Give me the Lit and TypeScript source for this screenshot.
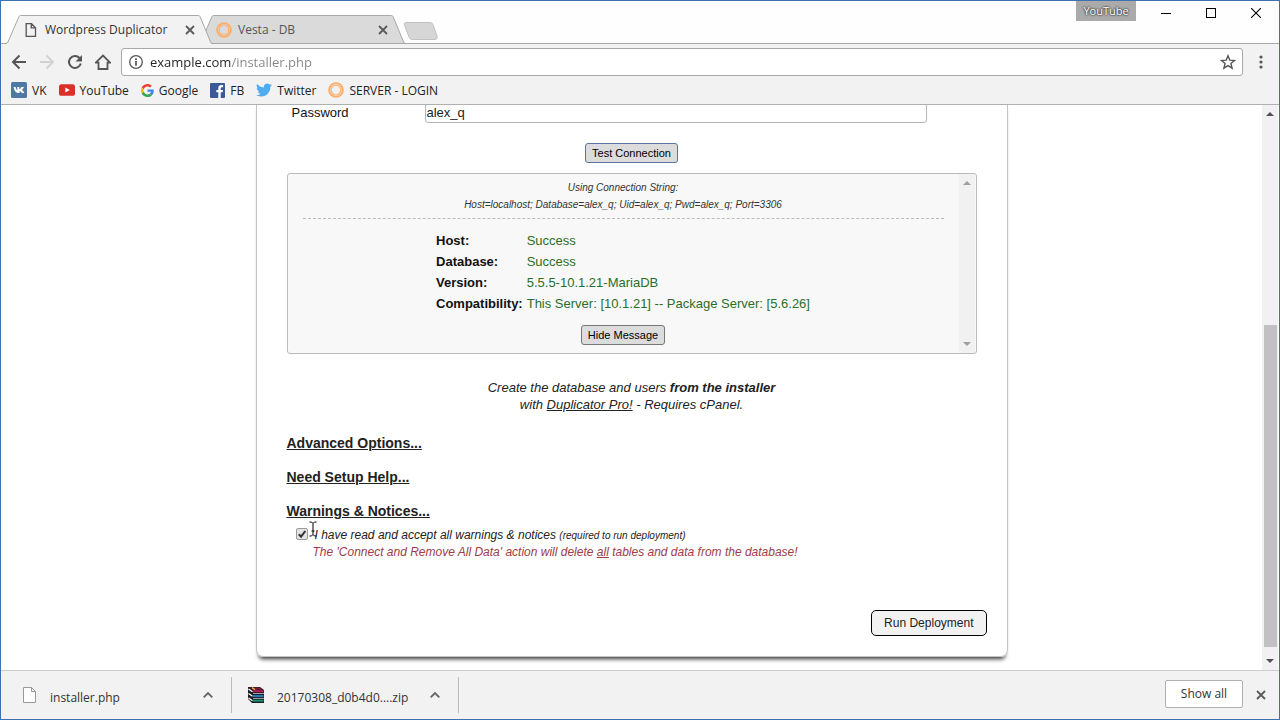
import { LitElement, html, css, svg } from "lit";
import { customElement, state } from "lit/decorators.js";

const cross = html`<svg class="cross" viewBox="0 0 10 10" width="10" height="10"><path d="M1 1l8 8M9 1l-8 8" stroke="#5a5a5a" stroke-width="1.8" fill="none"/></svg>`;
const ringIcon = html`<svg viewBox="0 0 16 16" width="16" height="16"><circle cx="8" cy="8" r="6.9" fill="none" stroke="#fbae6b" stroke-width="1.9"/><circle cx="8" cy="8" r="4.9" fill="none" stroke="#fcb577" stroke-width="1.4"/></svg>`;
const pageIcon = html`<svg viewBox="0 0 16 16" width="16" height="16"><path d="M3.200 1.700h5.300l4 4v8.600H3.200zM8.300 1.700v4.200h4.200" fill="none" stroke="#555" stroke-width="1.300"/></svg>`;

const bookmarks = [
  { label: "VK", icon: html`<svg viewBox="0 0 16 16" width="16" height="16"><rect width="16" height="16" rx="1.5" fill="#4f78a4"/><path d="M2.600 5h2c.2 1.500.9 2.900 1.700 3.200V5h2v2.200C9.200 7 9.900 6 10.300 5h2.600c-.4 1.300-1.300 2.400-2 3 .8.500 1.900 1.500 2.500 3h-2.600c-.4-1-1.300-1.800-2.200-2v2h-.7C5 11 3.100 9 2.600 5z" fill="#fff"/></svg>` },
  { label: "YouTube", icon: html`<svg viewBox="0 0 16 16" width="16" height="16"><rect y="2.200" width="16" height="11.600" rx="2.600" fill="#dc2f26"/><path d="M6.300 5.400v5L10.800 8z" fill="#fff"/></svg>` },
  { label: "Google", icon: html`<svg viewBox="0 0 48 48" width="13" height="13"><path fill="#EA4335" d="M24 9.500c3.540 0 6.710 1.220 9.210 3.600l6.850-6.850C35.900 2.380 30.470 0 24 0 14.620 0 6.510 5.380 2.560 13.220l7.980 6.190C12.430 13.720 17.740 9.500 24 9.500z"/><path fill="#4285F4" d="M46.980 24.550c0-1.570-.15-3.090-.38-4.550H24v9.020h12.940c-.58 2.960-2.260 5.480-4.780 7.180l7.730 6c4.510-4.180 7.090-10.360 7.090-17.650z"/><path fill="#FBBC05" d="M10.530 28.590c-.48-1.450-.76-2.990-.76-4.590s.27-3.140.76-4.590l-7.980-6.190C.92 16.460 0 20.120 0 24c0 3.880.92 7.540 2.560 10.780l7.970-6.190z"/><path fill="#34A853" d="M24 48c6.480 0 11.930-2.130 15.890-5.810l-7.730-6c-2.150 1.450-4.920 2.300-8.160 2.300-6.260 0-11.570-4.220-13.470-9.910l-7.980 6.190C6.510 42.620 14.620 48 24 48z"/></svg>` },
  { label: "FB", icon: html`<svg viewBox="0 0 15 15" width="15" height="15"><rect width="15" height="15" rx="1" fill="#3b5998"/><path d="M8.300 15V9.300H6.300V7h2V5.200C8.300 3.200 9.500 2 11.400 2h1.700v2.200h-1.200c-.9 0-1.200.4-1.200 1.200V7H13l-.3 2.300h-2V15z" fill="#fff"/></svg>` },
  { label: "Twitter", icon: html`<svg viewBox="0 0 24 24" width="16" height="16"><path fill="#50abf1" d="M23.950 4.570a10 10 0 0 1-2.820.77 4.960 4.960 0 0 0 2.160-2.720c-.95.550-2 .95-3.130 1.180a4.920 4.920 0 0 0-8.380 4.480C7.690 8.100 4.070 6.130 1.640 3.160a4.820 4.820 0 0 0-.67 2.480c0 1.710.87 3.210 2.190 4.100a4.900 4.900 0 0 1-2.230-.62v.06a4.920 4.920 0 0 0 3.950 4.830 5 5 0 0 1-2.210.08 4.940 4.940 0 0 0 4.600 3.420A9.870 9.870 0 0 1 0 19.540a13.990 13.990 0 0 0 7.550 2.210c9.050 0 14-7.500 14-13.980 0-.21 0-.42-.02-.63a9.940 9.940 0 0 0 2.420-2.570z"/></svg>` },
  { label: "SERVER - LOGIN", icon: ringIcon },
];

const results = [
  ["Host:", "Success"],
  ["Database:", "Success"],
  ["Version:", "5.5.5-10.1.21-MariaDB"],
  ["Compatibility:", "This Server: [10.1.21] -- Package Server: [5.6.26]"],
];

const arrow = (d: string, fill: string) => html`<svg viewBox="0 0 8 4" width="8" height="4"><path d=${d} fill=${fill}/></svg>`;
const UP = "M0 4L4 0l4 4z";
const DOWN = "M0 0l4 4 4-4z";

@customElement("app-root")
export class AppRoot extends LitElement {
  @state() private accepted = true;

  static styles = css`
    :host {
      display: block;
      font-family: "Open Sans", "Noto Sans", sans-serif;
      font-size: 12px;
      color: #222;
    }
    * { box-sizing: border-box; }
    button { font: inherit; color: inherit; margin: 0; padding: 0; border: 0; background: none; }
    svg { display: block; flex: none; }
    .window {
      height: 100vh;
      display: flex;
      flex-direction: column;
      border: 1px solid #3d71b0;
      background: #fff;
      overflow: hidden;
    }
    .strip {
      flex: none;
      height: 43px;
      display: flex;
      align-items: flex-end;
      padding-left: 4px;
      border-bottom: 1px solid #a8a8a8;
      background: #fefefe;
    }
    .tab { display: grid; width: 208px; height: 29px; margin-right: -15px; margin-bottom: -1px; }
    .tab.active { z-index: 1; }
    .tab > * { grid-area: 1 / 1; }
    .tab-body { display: flex; align-items: center; gap: 6px; padding: 0 18px; color: #333; }
    .tab-body.far { color: #555; }
    .tab-title { flex: 1; }
    .fresh { margin: 0 0 3px 12px; }
    .controls { margin-left: auto; align-self: stretch; display: flex; align-items: flex-start; }
    .badge {
      width: 60px; height: 20px; line-height: 20px; margin-right: 25px; text-align: center;
      font-size: 11px; color: #fff; background: #aaa;
      text-shadow: 0 0 2px #222, 0 0 2px #222;
    }
    .control { padding: 7px 0 0; width: 10px; margin-right: 35px; }
    .control:last-child { margin-right: 18px; }
    .toolbar {
      flex: none; height: 34px; display: flex; align-items: center;
      gap: 12px; padding: 2px 14px 0 10px; background: #f2f2f2;
    }
    .address {
      flex: 1; height: 28px; display: flex; align-items: center; gap: 6px; padding: 0 6px;
      border: 1px solid #a9a9a9; border-radius: 3px; background: #fff; margin: 0 2px 0 -2px;
    }
    .url {
      flex: 1; min-width: 0; border: 0; padding: 0; outline: 0; font: inherit; font-size: 13px;
      color: transparent; background: linear-gradient(90deg, #222 81px, #858585 81px);
      -webkit-background-clip: text; background-clip: text;
    }
    .dots { padding: 0 2px; }
    .bookmarks {
      flex: none; height: 27px; display: flex; align-items: center; gap: 12px;
      padding: 0 10px 2px; background: #f2f2f2; border-bottom: 1px solid #b0b0b0;
    }
    .bookmark { display: flex; align-items: center; gap: 5px; color: #222; text-decoration: none; }
    .view { flex: 1; min-height: 0; display: flex; overflow: hidden; padding-right: 1px; }
    .page {
      flex: 1; overflow: hidden;
      font-family: "Liberation Sans", Arial, sans-serif; font-size: 13px; color: #222;
    }
    .card {
      width: 752px; max-width: 100%; margin: -2px auto 0; padding: 0 20px 20px;
      border: 1px solid #c4c4c4; border-top: 0; border-radius: 0 0 7px 7px;
      box-shadow: 0 5px 4px -3px #333;
    }
    .inner { padding: 0 10px; }
    .field { display: flex; align-items: center; padding-left: 5px; }
    .field label { width: 133px; color: #111; padding-bottom: 2px; }
    .field input {
      width: 502px; height: 20px; padding: 0 1px 2px; font: inherit; color: #222;
      border: 1px solid #b5b5b5; border-radius: 3px; outline: 0; background: #fff;
    }
    .center { display: flex; justify-content: center; }
    .small {
      height: 20px; padding: 0 6px; font-size: 11px; color: #000;
      background: #dcdcdc; border: 1px solid #777; border-radius: 3px;
    }
    .small.focused { border-color: #5b74a0; }
    .test { margin: 20px 0 10px; }
    .message {
      display: flex; height: 181px; border: 1px solid #bbb; border-radius: 3px; background: #f8f8f8;
    }
    .message-body { flex: 1; padding: 5px 15px 0; }
    .conn {
      text-align: center; font-size: 10px; font-style: italic; line-height: 17px; color: #333;
      padding-bottom: 5px; border-bottom: 1px dashed #bbb; margin-bottom: 11px;
    }
    table { border-collapse: collapse; margin: 0 auto 11px; line-height: 21px; }
    th { padding: 0 4px 0 0; text-align: left; color: #111; }
    td { padding: 0; color: #2a6e2a; }
    .bar { flex: none; width: 16px; display: flex; flex-direction: column; align-items: center; background: #f1f1f1; }
    .message .bar { justify-content: space-between; padding: 7px 0; margin-right: 1px; }
    .promo { margin: 25px 0 22px; text-align: center; font-style: italic; line-height: 17px; }
    .promo a { color: inherit; }
    .section { display: block; width: max-content; margin-bottom: 17px; font-size: 14px; font-weight: bold; line-height: 17px; color: #222; }
    .section:last-of-type { margin-bottom: 7px; }
    .accept { display: flex; align-items: flex-start; gap: 7px; padding-left: 9px; line-height: 17px; font-style: italic; }
    .accept input {
      appearance: none; width: 12px; height: 12px; margin: 0; border: 1px solid #999; border-radius: 2px;
      background: #e4e4e4;
    }
    .tick { display: grid; padding-top: 1px; }
    .tick > * { grid-area: 1 / 1; pointer-events: none; }
    .tick input { pointer-events: auto; }
    .options { position: relative; font-size: 12px; }
    .fine { font-size: 10px; }
    .warn { padding-left: 26px; line-height: 17px; font-style: italic; color: #a03c44; }
    .caret { position: absolute; left: 22px; top: -6px; }
    .run { display: flex; justify-content: flex-end; margin-top: 49px; }
    .deploy {
      height: 26px; padding: 0 12px; font-size: 12px; color: #222;
      background: #f2f2f2; border: 1px solid #000; border-radius: 5px;
    }
    .view > .bar { padding: 7px 0; }
    .track { flex: 1; align-self: stretch; display: flex; flex-direction: column; padding: 5px 1px 5px 2px; }
    .before { flex: 204; }
    .thumb { flex: 321; background: #c1c1c1; }
    .after { flex: 7; }
    .downloads {
      flex: none; height: 49px; display: flex; align-items: center;
      padding-right: 13px; background: #f2f2f2; border-top: 1px solid #ccc; color: #333;
    }
    .file { width: 231px; height: 36px; padding: 0 18px 0 22px; display: flex; align-items: center; border-right: 1px solid #bbb; }
    .file.archive { width: 227px; padding-left: 16px; }
    .file-name { flex: 1; padding: 4px 0 0 14px; }
    .archive .file-name { padding-left: 13px; }
    .all {
      margin-left: auto; margin-right: 13px; width: 78px; height: 28px; margin-bottom: 2px; padding-bottom: 1px;
      background: #fff; border: 1px solid #b0b0b0; border-radius: 2px;
    }
  `;

  private tab(title: string, icon: unknown, active: boolean) {
    return html`<div class="tab ${active ? "active" : ""}">
      <svg viewBox="0 0 208 29" width="208" height="29">
        <path d="M0 28.500L2.500 28 14 1.500Q14.500 .5 15.500 .5H193.500Q194.500 .5 195 1.500L206 28 207.500 28.500" fill=${active ? "#f2f2f2" : "#dadada"} stroke="#a8a8a8"/>
        ${active ? svg`<path d="M2 28.500H206" stroke="#f2f2f2"/>` : svg`<path d="M0 28.500H208" stroke="#a8a8a8"/>`}
      </svg>
      <div class="tab-body ${active ? "" : "far"}">${icon}<span class="tab-title">${title}</span><button aria-label="Close tab">${cross}</button></div>
    </div>`;
  }

  render() {
    return html`<div class="window">
      <div class="strip">
        ${this.tab("Wordpress Duplicator", pageIcon, true)}
        ${this.tab("Vesta - DB", ringIcon, false)}
        <button class="fresh" aria-label="New tab"><svg viewBox="0 0 36 18" width="36" height="18"><path d="M3 .5H27Q29 .5 30 2.500L34 14Q35 17.500 32 17.500H9Q7 17.500 6 15L1.500 3Q.5 .5 3 .5z" fill="#d6d6d6" stroke="#c2c2c2"/></svg></button>
        <div class="controls">
          <div class="badge">YouTube</div>
          <button class="control" aria-label="Minimize"><svg viewBox="0 0 10 10" width="10" height="10"><path d="M0 5.500h10" stroke="#000"/></svg></button>
          <button class="control" aria-label="Maximize"><svg viewBox="0 0 10 10" width="10" height="10"><rect x=".5" y=".5" width="9" height="9" fill="none" stroke="#000"/></svg></button>
          <button class="control" aria-label="Close"><svg viewBox="0 0 10 10" width="10" height="10"><path d="M0 0l10 10M10 0L0 10" stroke="#000" stroke-width="1.100"/></svg></button>
        </div>
      </div>
      <div class="toolbar">
        <button aria-label="Back"><svg viewBox="0 0 16 16" width="16" height="16"><path d="M15 8H2.500M8.500 1.500L2 8l6.500 6.500" fill="none" stroke="#555" stroke-width="2"/></svg></button>
        <button aria-label="Forward"><svg viewBox="0 0 16 16" width="16" height="16"><path d="M1 8h12.500M7.500 1.500L14 8l-6.500 6.500" fill="none" stroke="#d2d2d2" stroke-width="2"/></svg></button>
        <button aria-label="Reload"><svg viewBox="0 0 16 16" width="16" height="16"><path d="M13.800 9.500A6 6 0 1 1 12.500 4" fill="none" stroke="#555" stroke-width="2"/><path d="M15 1v6.500H8.500z" fill="#555"/></svg></button>
        <button aria-label="Home"><svg viewBox="0 0 16 16" width="16" height="16"><path d="M.8 8.700L8 1.500l7.200 7.200h-2.700V15h-9V8.700z" fill="none" stroke="#555" stroke-width="1.800"/></svg></button>
        <div class="address">
          <svg viewBox="0 0 16 16" width="16" height="16"><circle cx="8" cy="8" r="6.300" fill="none" stroke="#555" stroke-width="1.300"/><path d="M8 7v4.800M8 4.200v1.700" stroke="#555" stroke-width="1.700"/></svg>
          <input class="url" aria-label="Address" .value=${"example.com/installer.php"} />
          <button aria-label="Bookmark"><svg viewBox="0 0 16 16" width="16" height="16"><path d="M8 1.800l1.800 4.400 4.700.3-3.600 3 1.200 4.700L8 11.600l-4.100 2.600 1.200-4.700-3.600-3 4.700-.3z" fill="none" stroke="#555" stroke-width="1.400"/></svg></button>
        </div>
        <button class="dots" aria-label="Menu"><svg viewBox="0 0 4 14" width="4" height="14"><circle cx="2" cy="2" r="1.600" fill="#555"/><circle cx="2" cy="7" r="1.600" fill="#555"/><circle cx="2" cy="12" r="1.600" fill="#555"/></svg></button>
      </div>
      <nav class="bookmarks">${bookmarks.map((b) => html`<a class="bookmark" href="#">${b.icon}<span>${b.label}</span></a>`)}</nav>
      <div class="view">
        <main class="page">
          <div class="card">
            <div class="inner">
              <div class="field"><label for="pass">Password</label><input id="pass" .value=${"alex_q"} /></div>
              <div class="center test"><button class="small focused">Test Connection</button></div>
              <div class="message">
                <div class="message-body">
                  <div class="conn">Using Connection String:<br />Host=localhost; Database=alex_q; Uid=alex_q; Pwd=alex_q; Port=3306</div>
                  <table><tbody>${results.map(([k, v]) => html`<tr><th>${k}</th><td>${v}</td></tr>`)}</tbody></table>
                  <div class="center"><button class="small">Hide Message</button></div>
                </div>
                <div class="bar">${arrow(UP, "#a0a0a0")}${arrow(DOWN, "#a0a0a0")}</div>
              </div>
              <div class="promo">Create the database and users <b>from the installer</b><br />with <a href="#">Duplicator Pro!</a> - Requires cPanel.</div>
              <a class="section" href="#">Advanced Options...</a>
              <a class="section" href="#">Need Setup Help...</a>
              <a class="section" href="#">Warnings &amp; Notices...</a>
              <div class="options">
                <div class="accept">
                  <span class="tick"><input id="accept" type="checkbox" .checked=${this.accepted} @change=${() => (this.accepted = !this.accepted)} />
                  ${this.accepted ? html`<svg viewBox="0 0 12 12" width="12" height="12"><path d="M2.800 6.200l2.300 2.500L9.300 3" fill="none" stroke="#333" stroke-width="2"/></svg>` : ""}</span>
                  <label for="accept">I have read and accept all warnings &amp; notices <span class="fine">(required to run deployment)</span></label>
                </div>
                <div class="warn">The 'Connect and Remove All Data' action will delete <u>all</u> tables and data from the database!</div>
                <svg class="caret" viewBox="0 0 8 16" width="8" height="16"><path d="M.5 1h2L4 2.500 5.500 1h2M4 2.500v11M.5 15h2L4 13.500 5.500 15h2M2.500 10h3" fill="none" stroke="#000"/></svg>
              </div>
            </div>
            <div class="run"><button class="deploy">Run Deployment</button></div>
          </div>
        </main>
        <div class="bar">${arrow(UP, "#505050")}<div class="track"><div class="before"></div><div class="thumb"></div><div class="after"></div></div>${arrow(DOWN, "#505050")}</div>
      </div>
      <footer class="downloads">
        <div class="file"><svg viewBox="0 0 13 16" width="13" height="16"><path d="M.5 .5h8l4 4v11H.5zM8.500 .5v4h4" fill="#fff" stroke="#999"/></svg><span class="file-name">installer.php</span>
          <svg viewBox="0 0 10 6" width="10" height="6"><path d="M.7 5.300L5 1l4.300 4.300" fill="none" stroke="#666" stroke-width="1.800"/></svg></div>
        <div class="file archive"><svg viewBox="0 0 16 16" width="16" height="16">
            <path d="M0 0h12l4 3v13H4L0 12z" fill="#1c1c24"/>
            <path d="M1 .5h10.500L15 2.800H5z" fill="#7d1837"/><path d="M5 3.300h10.500v1.900H5z" fill="#c2185b"/>
            <path d="M5 8h10.500v2H5z" fill="#2376b8"/><path d="M5 12.700h10.500v2H5z" fill="#13906c"/>
            <path d="M.5 2l4 2.800M.5 6.500l4 2.800M.5 11l4 2.800" stroke="#fff" stroke-width="1.300"/><path d="M5 6.500h11M5 11.400h11" stroke="#fff" stroke-width=".6"/><path d="M4 .5l3 2.300" stroke="#f0c23b" stroke-width="1.200"/></svg>
          <span class="file-name">20170308_d0b4d0....zip</span>
          <svg viewBox="0 0 10 6" width="10" height="6"><path d="M.7 5.300L5 1l4.300 4.300" fill="none" stroke="#666" stroke-width="1.800"/></svg></div>
        <button class="all">Show all</button>
        <button aria-label="Close downloads">${cross}</button>
      </footer>
    </div>`;
  }
}
